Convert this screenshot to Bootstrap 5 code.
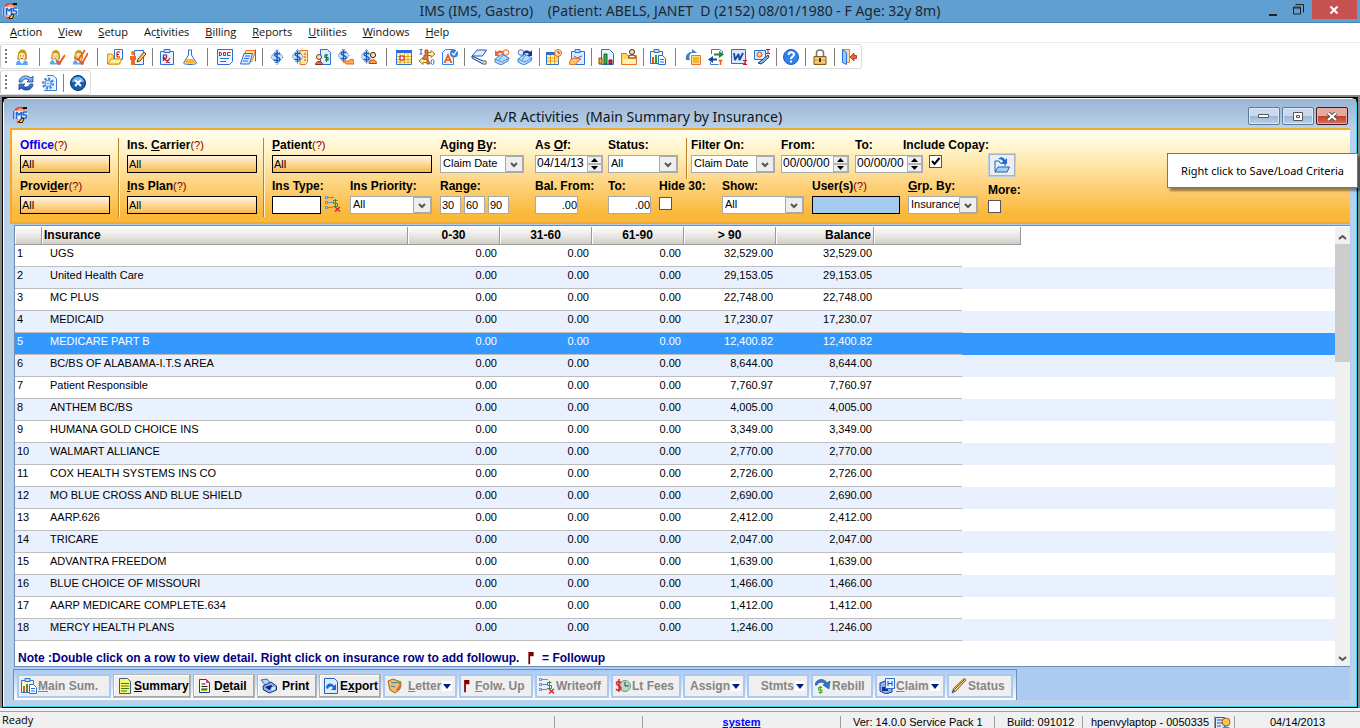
<!DOCTYPE html>
<html lang="en">
<head>
<meta charset="utf-8">
<meta name="viewport" content="width=device-width, initial-scale=1">
<title>IMS - A/R Activities</title>
<link href="https://cdn.jsdelivr.net/npm/bootstrap@5.3.0/dist/css/bootstrap.min.css" rel="stylesheet">
<script src="https://cdn.jsdelivr.net/npm/bootstrap@5.3.0/dist/js/bootstrap.bundle.min.js"></script>
<style>
:root{--ui:"Open Sans","Noto Sans",sans-serif;--cap:"Noto Sans","Open Sans",sans-serif;--ms:"Liberation Sans",Arial,sans-serif}
body{font:11px/14px var(--ms);color:#000;background:#fff}
u{text-decoration:underline;text-underline-offset:1px}
button,input,select{font:inherit;color:inherit}
.ico{width:16px;height:16px;flex:none;display:block}
/* main window caption */
.caption{height:23px;background:#619fd0;border-bottom:1px solid #4585b8;font:14px/22px var(--cap);color:#1c2630}
.caption .ico{margin:3px 0 0 2px}
.capbtn{border:0;background:none;padding:0;width:26px;height:19px}
.capbtn svg{display:block;margin:auto}
.capx{width:45px;background:#c75050;margin-right:3px}
.side{width:100px}
.sider{width:184px;gap:2px;padding:8px 2px 0 0}
.menubar{height:20px;border-bottom:1px solid #ececec;font:11px/18px var(--ui);padding-left:10px;gap:16px}
.menubar a{color:#111;text-decoration:none}
/* tool strips */
.strip{height:25px;margin-top:1px;border:1px solid #dcdcdc;border-left-color:#ccc;border-radius:3px;padding-left:4px;width:max-content}
.grip{width:2px;height:16px;margin-right:4px;background:repeating-linear-gradient(#777 0 2px,#fff 2px 4px)}
.strip button{width:23px;height:22px;border:0;background:none;padding:3px}
.sepw{width:12px;height:18px;border-left:1px solid #808080;margin-left:5px;margin-right:-5px}
.sepn{width:6px;height:18px;border-left:1px solid #808080;margin-left:2px;margin-right:-2px}
/* child window */
.mdi{min-height:0;background:#000;border:2px solid #888;border-bottom:0;padding:1px 0 0 1px}
.child{min-height:0;background:#b9d1ea;border:1px solid #fff;border-right-color:#2fd6ee;border-bottom-color:#2fd6ee;border-top-left-radius:6px;border-top-right-radius:6px;margin:0 1px 1px 0;padding:0 6px 6px}
.childcap{height:29px;margin:0 -6px;padding:0 6px;background:linear-gradient(#9ab5d3,#b9d1ea);font:14px/36px var(--cap);color:#101418}
.childcap .ico{margin:8px 0 0 2px}
.wbtn{width:32px;height:18px;padding:0;border:1px solid #5f7895;border-radius:2px;background:linear-gradient(#c9daee 48%,#9db8d6 50%,#b8d0ea);box-shadow:inset 0 0 0 1px #dbe8f5}
.wbtn svg{display:block;margin:auto}
.wbtnx{background:linear-gradient(#e6a79c 48%,#bf3f25 50%,#d3715c);border-color:#4a1420;box-shadow:inset 0 0 0 1px #e8b0a6}
/* criteria */
.criteria{height:96px;flex:none;border:2px solid #f0a92e;border-right:0;background:linear-gradient(#fffdea 4%,#fff3c8 22%,#fdd27c 60%,#fbb93c 90%);padding:8px 0 0 8px}
.criteria label{display:block;font-size:12px;font-weight:700;white-space:nowrap;line-height:14px;margin-bottom:3px}
.criteria .q{font-size:11px;font-weight:400;color:#800000}
.fld{height:41px;flex:none}
.box{display:block;height:18px;border:1px solid #000;padding:0 1px;line-height:15px;background:linear-gradient(#fff5e4,#fbba4a);border-radius:0;width:100%}
.blank{background:#fff}
.plain{border:1px solid #a9a9a9;background:#fff}
.vline{width:2px;border-left:1px solid #b8842a;border-right:1px solid #fff3d0;height:79px;margin-right:7px}
.vshort{height:auto;margin-right:3px}
.v2{margin-left:2px}.v6{margin-left:6px}
.dd{display:block;height:18px;border:1px solid #a9a9a9;border-radius:0;appearance:none;padding:0 18px 2px 2px;line-height:14px;background:#fff url("data:image/svg+xml,%3Csvg xmlns='http://www.w3.org/2000/svg' width='18' height='16'%3E%3Cpath d='M.5.5h17v15H.5z' fill='%23eee' stroke='%23a9a9a9'/%3E%3Cpath d='M6 7l3 3 3-3' fill='none' stroke='%23555' stroke-width='2'/%3E%3C/svg%3E") right/18px 16px no-repeat}
.spin{height:18px;border:1px solid #a9a9a9;background:#fff}
.spin input{width:51px;border:0;padding:0 1px;height:15px;line-height:15px;font-size:12px;background:none}
.spin button{display:block;width:15px;height:8px;padding:0;border:1px solid #b5b5b5;background:#eee}
.spin svg{display:block;margin:auto}
.num{text-align:right;padding-right:0}
.chk{appearance:none;width:13px;height:13px;border:1px solid #555;background:#fff;display:block;margin:0}
.chk:checked{background:#fff url("data:image/svg+xml,%3Csvg xmlns='http://www.w3.org/2000/svg' width='11' height='11'%3E%3Cpath d='M2 5l2.5 3L9.500 2' fill='none' stroke='%23000' stroke-width='2'/%3E%3C/svg%3E") center no-repeat}
.w21{width:21px}.w43{width:43px}.w49{width:49px}.w82{width:82px}.w88{width:88px}.w70{width:70px}.w84{width:84px}.w130{width:130px}
.s51{width:51px}.s63{width:63px}.s73{width:73px}.s74{width:74px}.s78{width:78px}.s80{width:80px}.s90{width:90px}.s95{width:95px}.s96{width:96px}.s168{width:168px}
.rng{gap:3px}.userbox{background:#a6caf0}
.pull{margin-left:-26px}
.iconbtn{width:26px;height:22px;border:1px solid #a0b4cc;outline:1px solid #b8cfe8;background:#eee;padding:1px 4px}
.tip{position:absolute;right:-8px;top:23px;border:1px solid #767676;background:#fff;box-shadow:3px 3px 2px #0006;padding:9px 13px;font:11px/15px var(--cap);z-index:3}
/* list */
.listbox{min-height:0;background:#fff;border:1px solid #6e8fb8;border-width:1px 0 1px 1px;margin:1px 0 0 4px;padding-top:1px;outline:1px solid #aecbf0}
.grid{width:100%;table-layout:fixed;border-collapse:separate;border-spacing:0}
.grid th{height:18px;padding:0 2px;background:linear-gradient(#fdfdfc,#e6e4df 60%,#cfccc4);border:solid #9a9a9a;border-width:0 1px 1px 0;box-shadow:inset 1px 0 #fff;font-size:12px;line-height:17px;text-align:center}
.grid th:last-child{background:#fff;border:0;box-shadow:none}
.grid td{height:22px;padding:0 3px 4px 2px;line-height:17px;border-bottom:1px solid #bdbdbd;white-space:nowrap;text-align:right}
.grid td.l{text-align:left}
.grid td.name{padding-left:8px}
.grid td.tail{border:0;background:linear-gradient(#bdbdbd,#bdbdbd) left bottom/88px 1px no-repeat}
.grid td.rest{border:0}
.grid td.b{padding-right:2px}
.grid tbody tr:nth-child(even){background:#eaf1fe}
.grid tbody tr.sel{background:#39f;color:#fff}
.sbar{width:15px;background:#f0f0f0}
.sbar button{height:17px;border:0;padding:0;background:none;width:15px}
.thumb{height:118px;background:#cdcdcd}
.note{color:#000080;font-size:12px;font-weight:700;padding:10px 3px 8px;white-space:pre}
.btnzone{background:#accbf2;margin-left:3px;flex:none}
.btnbar{border:1px solid #6e8fb8;border-bottom:0;margin-top:2px;padding:4px 3px 2px;gap:2px;background:linear-gradient(#a9caf5,#fff);width:max-content}
.cmd{height:24px;border:2px solid #abc9ee;background:#efefef;font-size:12px;font-weight:700;padding:0 2px;display:flex;align-items:center;gap:1px;white-space:nowrap}
.cmd svg{flex:none}
.cmd.on{border:1px solid #b4b4b4;padding:0 3px;box-shadow:inset -1px -1px #a8a8a8,inset 1px 1px #fff}
.cmd:disabled{color:#858585}
.b60{width:60px}.b62{width:62px}.b66{width:66px}.b70{width:70px}.b74{width:74px}.b78{width:78px}.b94{width:94px}
/* status bar */
.statusbar{height:20px;flex:none;background:#f0f0f0;border-top:1px solid #fff;overflow:hidden;white-space:nowrap}
.statusbar .inner{border-top:1px solid #a0a0a0;margin-top:2px;padding-left:2px}
.statusbar .pane{border-left:1px solid #a0a0a0;height:12px;margin-top:4px;line-height:12px}
.ready{font:11px/15px var(--ui)}.sys{color:#00f}
.p20{width:20px}.p88{width:88px}.p126{width:126px}.p132{width:132px}.p154{width:154px}.p198{width:198px}
</style>
</head>
<body class="d-flex flex-column vh-100 overflow-hidden">

<svg width="0" height="0" class="position-absolute" aria-hidden="true"><defs>
<linearGradient id="bl" x2="0" y2="1"><stop stop-color="#9cf"/><stop offset="1" stop-color="#1450b8"/></linearGradient>
<symbol id="ims" viewBox="0 0 16 16"><circle cx="8" cy="8" r="7" fill="#f3a98a"/><path d="M3 3l5-3 5 2M5 15h6" stroke="#d43" stroke-width="2" fill="none"/><path d="M0 4h16v8H0z" fill="#eaf3ff"/><path d="M1.500 4v8M4.500 12V5L7 8l2.500-3v7M15.500 5h-4v3h3v3h-4" fill="none" stroke="#2468d8" stroke-width="1.700" stroke-linejoin="bevel"/><path d="M11 0h4v2h-4z" fill="#111"/><path d="M7 15l3-4 2 1-2 4z" fill="#fd0" stroke="#111"/></symbol>
<symbol id="head" viewBox="0 0 16 16"><path d="M2 16c0-4 2-5 6-5s6 1 6 5z" fill="#5aa5f5"/><path d="M5 11l3 4 3-4z" fill="#fff"/><path d="M3 10c1-2 0-9 5-9.500S13 6 13 10l-2 1H5z" fill="#c79a1c"/><ellipse cx="8" cy="7.500" rx="3.200" ry="3.700" fill="#ffe9a8"/><path d="M6 7h1M9 7h1M7 9.500h2" stroke="#754"/></symbol>
<symbol id="head1" viewBox="0 0 16 16"><use href="#head" x="-1" width="15" height="16"/><path d="M7 11l3 4 6-9" stroke="#e8591c" stroke-width="2" fill="none"/></symbol>
<symbol id="head2" viewBox="0 0 16 16"><use href="#head" x="-1" width="15" height="16"/><path d="M3 8l3 3 7-10M7 11l3 4 6-11" stroke="#e8591c" stroke-width="1.600" fill="none"/></symbol>
<symbol id="folderE" viewBox="0 0 16 16"><path d="M7.500.500h8v10h-8z" fill="#fff" stroke="#2a6fd6"/><path d="M13 3h-3v5h3M10 5.500h2" stroke="#b00" fill="none"/><path d="M.500 15V5h5l1 2v3h8l-2 5z" fill="#ffe073" stroke="#e88a10"/><path d="M1 15l3-5h11l-3 5z" fill="#fff0a0" stroke="#e88a10"/></symbol>
<symbol id="pmanpen" viewBox="0 0 16 16"><path d="M4.500 1.500h9v14h-9z" fill="#eef6ff" stroke="#2a6fd6"/><circle cx="3" cy="4" r="2" fill="#f26b21"/><path d="M0 7h6v4H5v5H1v-5H0z" fill="#f26b21"/><path d="M7 13l1-3 6-7 2 2-6 7z" fill="#ffc94d" stroke="#832"/></symbol>
<symbol id="rx" viewBox="0 0 16 16"><path d="M1.500 2.500h13v13h-13z" fill="#e9f4ff" stroke="#2a6fd6"/><path d="M5 .500h6v3H5z" fill="#bfe0ff" stroke="#2a6fd6"/><path d="M4.500 12V6h3v3h-3l6 5M11 9l-3.500 5" stroke="#a01838" fill="none" stroke-width="1.200"/></symbol>
<symbol id="flask" viewBox="0 0 16 16"><path d="M6 1h4M6.500 1v5L1.500 14c0 2 13 2 13 0L9.500 6V1" fill="#fff" stroke="#2a6fd6"/><path d="M4.500 10h7l2 4c-1 1-10 1-11 0z" fill="#ffb52b"/></symbol>
<symbol id="doc" viewBox="0 0 16 16"><path d="M.500.500h15v12l-3 3H.500z" fill="#eef6ff" stroke="#2a6fd6"/><path d="M2.500 3v4l2-1V4zM6.500 3.500h2v3h-2zM13.500 3.500h-3v3h3" stroke="#b01020" stroke-width=".9" fill="none"/><path d="M3 9.500h9M3 12.500h6" stroke="#2a6fd6"/></symbol>
<symbol id="pages" viewBox="0 0 16 16"><path d="M6 1.500h9.500L12 12.500H2.500z" fill="#ffe9a0" stroke="#f07020"/><path d="M15.500.500v12" stroke="#2a6fd6"/><path d="M4 4.500h8.500l-3 10.500H.500z" fill="#d8eaff" stroke="#2a6fd6"/><path d="M5 7h5M4 9.500h5M3 12h5" stroke="#2a6fd6"/></symbol>
<symbol id="dol" viewBox="0 0 16 16"><path d="M8 .500L14 8l-6 7.500L2 8z" fill="#cfe4fb" stroke="#3b7ed0" stroke-dasharray="2 1"/><path d="M10.800 5.500C10 4 5.500 4 5.500 6s5.300 1.800 5.300 4-4.500 2-5.600.500M8 2v12" fill="none" stroke="#1756b8" stroke-width="1.400"/></symbol>
<symbol id="dolnote" viewBox="0 0 16 16"><path d="M8 1.500h7.500v12l-2 2H8z" fill="#ffe79a" stroke="#f07020"/><path d="M12 5h2M12 8h2M12 11h2" stroke="#d33"/><use href="#dol" x="-2" width="15" height="15"/></symbol>
<symbol id="doldoc" viewBox="0 0 16 16"><path d="M5.500.500h7l3 3v12h-10z" fill="#dcebff" stroke="#2a6fd6"/><path d="M13 6h-3v2.500h3V11h-3M11.500 5v8" stroke="#187a38" fill="none" stroke-width="1.200"/><circle cx="4" cy="8" r="2.500" fill="#ffe0b0" stroke="#733a18"/><path d="M.500 15.500c0-4 7-4 7 0z" fill="#f2703a" stroke="#8b2a10"/></symbol>
<symbol id="dolhand" viewBox="0 0 16 16"><use href="#dol" x="-2" y="-1" width="15" height="15"/><path d="M5 12h5l4-2 2 1v4H8z" fill="#ffa94a" stroke="#e8641c"/></symbol>
<symbol id="dolman" viewBox="0 0 16 16"><use href="#dol" x="-2" width="15" height="15"/><circle cx="12" cy="6" r="2.600" fill="#ffdcae" stroke="#55240c"/><path d="M8 14.500c0-5 7.500-5 7.500 0z" fill="#ff9c50" stroke="#b54414"/></symbol>
<symbol id="cal" viewBox="0 0 16 16"><path d="M.500 1.500h15v14H.500z" fill="#fff6c2" stroke="#2a6fd6"/><path d="M0 1h16v3H0z" fill="#2a6fd6"/><path d="M1 7.500h14M1 10.500h14M1 13h14M4 4v11M8.500 4v11M12 4v11" stroke="#f0a818"/><path d="M4 7h4v4H4z" fill="#fff" stroke="#b01020"/></symbol>
<symbol id="io" viewBox="0 0 16 16"><path d="M2 0v5M.500.500h3M.500 5h3" stroke="#2a6fd6"/><path d="M6 1h3v4H6zM5 6h4v4l2 5H8l-1-3-3 1z" fill="#f0752a" stroke="#8f3e0c" stroke-width=".7"/><path d="M0 12l4-3.500v2h4v3H4v2zM16 5l-4-3.500v2H9v3h3v2z" fill="#fff1b0" stroke="#96661a" stroke-width=".9"/><ellipse cx="13.500" cy="13" rx="1.500" ry="2.500" fill="#fff" stroke="#2a6fd6"/></symbol>
<symbol id="acheck" viewBox="0 0 16 16"><path d="M.500 3.500l3-3h8v15H.500z" fill="#eef6ff" stroke="#2a86f0"/><path d="M2.500 14L6 6l3.500 8M4 11h4" stroke="#f05010" stroke-width="1.700" fill="none"/><circle cx="12" cy="4.500" r="4" fill="#3b7ed0"/><path d="M10 4l2 2 3-5" stroke="#fff" stroke-width="1.300" fill="none"/></symbol>
<symbol id="flag3" viewBox="0 0 16 16"><path d="M6 1h9.500l-4 6H1z" fill="#dcecff" stroke="#2458b8"/><path d="M1 7l11 5h3v3h-3L1 9z" fill="#cfe4ff" stroke="#1c3c98"/><path d="M12 12.500h3v2h-3z" fill="#fc3"/></symbol>
<symbol id="mailr" viewBox="0 0 16 16"><path d="M1 10l7-5 7 4-1 3-7 4-6-3z" fill="#b7dbfb" stroke="#3b7ed0"/><path d="M1 10l7 3 7-4M4 12l5-6" stroke="#4d92dd" fill="none"/><circle cx="12" cy="3.500" r="2.800" fill="#ffe8d8" stroke="#f26522"/><path d="M1 1v6h5L4 5c3-2 5-1 6 2 1-5-4-7-7-4z" fill="#f26522"/></symbol>
<symbol id="mailb" viewBox="0 0 16 16"><path d="M1 10l7-5 7 4-1 3-7 4-6-3z" fill="#b7dbfb" stroke="#3b7ed0"/><path d="M1 10l7 3 7-4M4 12l5-6" stroke="#4d92dd" fill="none"/><circle cx="4" cy="3.500" r="2.800" fill="#e4f2ff" stroke="#5a7ab0"/><path d="M15 1v6h-5l2-2C9 3 7 4 6 7 5 2 10 0 13 3z" fill="#16349c"/></symbol>
<symbol id="calclk" viewBox="0 0 16 16"><path d="M.500 3.500h12v12H.500z" fill="#fff3a8" stroke="#2a6fd6"/><path d="M0 3h12v3H0z" fill="#2a6fd6"/><path d="M1 9h12M1 12h12M4.500 6v9M8.500 6v9" stroke="#e8a010"/><circle cx="12" cy="4" r="3.500" fill="#ffe3a0" stroke="#e8641c"/><path d="M12 2v2h2" stroke="#a33" fill="none"/></symbol>
<symbol id="cliphand" viewBox="0 0 16 16"><path d="M2.500 2.500h13v13h-13z" fill="#d8ebff" stroke="#2a6fd6"/><path d="M6 .500h5v3H6z" fill="#bfe0ff" stroke="#2a6fd6"/><path d="M5 7l3 2 5-2" stroke="#2a6fd6" fill="none"/><path d="M0 15l2-5 4-1 6 1-3 2-3 4z" fill="#ffc36b" stroke="#e8641c"/></symbol>
<symbol id="chart" viewBox="0 0 16 16"><path d="M3.500.500h8l4 4v11h-12z" fill="#e6f2ff" stroke="#2a6fd6"/><path d="M1 9h3v6H1z" fill="#f5b320" stroke="#84400c"/><path d="M6 5h3v10H6z" fill="#36b24a" stroke="#0d6a24"/><path d="M11 11h3v4h-3z" fill="#d8262c" stroke="#7a0c10"/></symbol>
<symbol id="foldman" viewBox="0 0 16 16"><path d="M.500 15.500v-11h5l1 2h9v9z" fill="#ffd75a" stroke="#f07020"/><path d="M2 10h13v5H2z" fill="#fff4b8"/><circle cx="11" cy="3" r="2.500" fill="#ffe0b0" stroke="#4c1c10"/><path d="M7.500 9c0-4 7-4 7 0z" fill="#fff" stroke="#7c1818"/></symbol>
<symbol id="clipbar" viewBox="0 0 16 16"><path d="M.500 2.500h12v12H.500z" fill="#fff6cf" stroke="#2a6fd6"/><path d="M4 .500h5v3H4z" fill="#bfe0ff" stroke="#2a6fd6"/><path d="M2 8h2v6H2z" fill="#e8591c"/><path d="M5 6h2v8H5z" fill="#3a9a3a"/><path d="M8.500 6.500h4l3 3v6h-7z" fill="#fff" stroke="#2a6fd6"/><path d="M10 10.500h4M10 13h4" stroke="#2a6fd6"/></symbol>
<symbol id="sendnote" viewBox="0 0 16 16"><path d="M6.500 6.500h9v9h-9z" fill="#ffe36a" stroke="#f07020"/><path d="M8 9h6M8 11h6M8 13h6" stroke="#d98a10"/><path d="M1 11c-1-5 2-8 6-8V0l5 4H7C4 5 4 8 5 11z" fill="#3b7ed0"/></symbol>
<symbol id="swap" viewBox="0 0 16 16"><path d="M3.500 5V.500h8l3 2v2M2.500 13v2.500h8" fill="none" stroke="#3b7ed0"/><path d="M6 4.500h5V2l5 3.500L11 9V6.500H6z" fill="#1f8a2c"/><path d="M9 9.500H5V7L0 10.500 5 14v-2.500h4z" fill="#17479e"/><path d="M10.500 11.500h4M12.500 11v5" stroke="#e8591c" stroke-width="1.500"/></symbol>
<symbol id="word" viewBox="0 0 16 16"><path d="M.500.500h14v14H.500z" fill="#dbeafd" stroke="#2a6fd6"/><path d="M3 4l1 7 3.500-6 1 6L12 4" stroke="#1747a0" stroke-width="1.800" fill="none" stroke-linejoin="bevel"/><path d="M12 11.500h4M12 15.500h4M14 11v4" stroke="#c01818"/></symbol>
<symbol id="paint" viewBox="0 0 16 16"><path d="M.500 1.500h11v9H.500z" fill="#dcecff" stroke="#2a6fd6"/><circle cx="5.500" cy="5.500" r="2.500" fill="#ffd9a0" stroke="#b44"/><path d="M14 6l1 2-5 5-3 2-3-1 4-3z" fill="#8bb8ea" stroke="#1c3c80"/><path d="M12 .500h4M14 0v4M12 4.500h4" stroke="#c01818"/></symbol>
<symbol id="help" viewBox="0 0 16 16"><circle cx="8" cy="8" r="7.500" fill="#2f82ea" stroke="#1d5cc0"/><path d="M5.500 6c0-3.500 5.500-3.500 5.500-.500C11 7.500 8 7.500 8 10M8 11.500v2" stroke="#fff" stroke-width="2" fill="none"/></symbol>
<symbol id="lock" viewBox="0 0 16 16"><path d="M4.500 7V4c0-4 7-4 7 0v3" stroke="#777" stroke-width="1.600" fill="none"/><path d="M2 7.500h12v8H2z" fill="#e9b64a" stroke="#8a5f14"/><path d="M3 9.500h10M3 13h10" stroke="#fbe0a0"/><path d="M8 9v4" stroke="#432" stroke-width="2"/></symbol>
<symbol id="exit" viewBox="0 0 16 16"><path d="M1.500.500h7v13h-7z" fill="#ffd9a0" stroke="#e88a10"/><path d="M1.500.500l4 3v12l-4-2z" fill="#9cc6f5" stroke="#2a6fd6"/><path d="M15.500 6.500h-2.500V4L9 8l4 4V9.500h2.500z" fill="#f0642a" stroke="#a82810" stroke-width=".8"/></symbol>
<symbol id="refresh" viewBox="0 0 16 16"><path d="M1 7C1 1 9-1 13 3l2-2v6H9l2-2C8 3 5 4 4 7zM15 9c0 6-8 8-12 4l-2 2V9h6l-2 2c3 2 6 1 7-2z" fill="url(#bl)" stroke="#1a448c" stroke-width=".8"/></symbol>
<symbol id="gearpage" viewBox="0 0 16 16"><path d="M6 .500h6l3.500 3v12H3" fill="#eaf4ff" stroke="#3b7ed0"/><circle cx="7" cy="8.500" r="4.800" fill="none" stroke="#3b7ed0" stroke-width="2.500" stroke-dasharray="2 1.700"/><circle cx="7" cy="8.500" r="3.200" fill="#fff" stroke="#3b7ed0"/><path d="M7 5v7M3.500 8.500h7" stroke="#8ab4ea"/></symbol>
<symbol id="closeball" viewBox="0 0 16 16"><circle cx="8" cy="8" r="7.500" fill="#1660b4" stroke="#0c2f70"/><path d="M2 7c1-7 11-7 12 0z" fill="#6cb4ee"/><path d="M5 5l6 6M11 5l-6 6" stroke="#fff" stroke-width="2"/></symbol>
<symbol id="listx" viewBox="0 0 16 16"><path d="M.500.500h2v2h-2zM.500 5.500h2v2h-2zM.500 10.500h2v2h-2zM3 1.500h6M3 6.500h5M3 11.500h5" stroke="#5b8fd8" fill="none"/><path d="M12.500 4.500h-4v3h4v3H8M10.500 3v9" stroke="#3d8a4c" fill="none"/><path d="M10 11l5 4.500M15 11l-5 4.500" stroke="#c22" stroke-width="1.300"/></symbol>
<symbol id="openf" viewBox="0 0 16 16"><path d="M1 15V4h4l1 2h5v3" fill="#e0f0ff" stroke="#1d62b8"/><path d="M1 15l3-5h11.500L13 15z" fill="#9fd2fa" stroke="#1d62b8"/><path d="M4 2c3-3 6-2 7 1l2-2v6H7l2-2c0-2-2-3-5-3z" fill="#2068d8"/></symbol>
<symbol id="ypage" viewBox="0 0 16 16"><path d="M2.500.500h8l3 3v12h-11z" fill="#fff66a" stroke="#27638c"/><path d="M4 5.500h8M4 8h8M4 10.500h8M4 13h6" stroke="#3a7d1c"/></symbol>
<symbol id="dpage" viewBox="0 0 16 16"><path d="M2.500 1.500h7l3 3v10h-10z" fill="#fffbe0" stroke="#1b3aa0"/><path d="M4 11h6v2H4z" fill="#8c2"/><path d="M4.500 6h4M4.500 8.500h6M4.500 11h6" stroke="#222"/><path d="M9 1l4 4H9z" fill="#e833b8"/></symbol>
<symbol id="printer" viewBox="0 0 16 16"><path d="M0 2l6-1 4 5-5 2z" fill="#b9d4f6" stroke="#3f62b0"/><path d="M2 8l8-4 5.500 4v4l-7 3-6-3z" fill="#8fb2ea" stroke="#1b2f80"/><path d="M4 9l6-2 3 2-5 3z" fill="#16247c"/><circle cx="12" cy="10.500" r="2" fill="#d8f0ff"/></symbol>
<symbol id="exportp" viewBox="0 0 16 16"><path d="M1.500.500h10l3 3v12h-13z" fill="#d9ecff" stroke="#1d62b8"/><path d="M3 10c0-5 6-6 8-2l2-2v6H8l2-2c-1-2-4-2-5 1z" fill="#2068c8"/></symbol>
<symbol id="letter" viewBox="0 0 16 16"><path d="M1 3l5-2 8 3-1 7-5 4-5-3z" fill="#ecc068" stroke="#9a6a20"/><path d="M4 4l3 1 4-1M4 8l4 1" stroke="#3a7ad0" fill="none"/><path d="M9 12l4-6 2 1-4 6z" fill="#e85a4a"/><path d="M11 4h3v2h-3z" fill="#5b3"/></symbol>
<symbol id="flag" viewBox="0 0 16 16"><path d="M5 1h6v5H7v9H5z" fill="#800000"/></symbol>
<symbol id="fees" viewBox="0 0 16 16"><circle cx="10" cy="8" r="5.500" fill="#b5dcc0" stroke="#6a9a7c"/><path d="M10 4v4h4" stroke="#246" fill="none"/><path d="M6 5C5 3 1.500 3 1.500 5.500s4.500 2 4.500 4.500-3.500 3-5 1M4 1v13" stroke="#d8262c" stroke-width="1.500" fill="none"/></symbol>
<symbol id="rebill" viewBox="0 0 16 16"><path d="M0 7c1-7 10-7 12-2l3-2-1 8-6-4 2-1C8 3 3 4 2 7z" fill="#2f78c8" stroke="#174a8c" stroke-width=".6"/><path d="M7 9.500H3.500v2.500H7v2.500H3.500M5.200 8v8" stroke="#3a2" fill="none"/></symbol>
<symbol id="claim" viewBox="0 0 16 16"><path d="M1 5l5-2 3 6 4 1v4l-6 2-6-3z" fill="#8fb0ea" stroke="#1b3f90"/><path d="M3 9h6v4H3z" fill="#1c2f88"/><path d="M6.500.500h9v10h-9z" fill="#e6f2ff" stroke="#2a6fd6"/><path d="M9 3v5M13 3v5M9 5.500h4" stroke="#1747a0"/></symbol>
<symbol id="pen" viewBox="0 0 16 16"><path d="M1 15l1.500-4.500L13 .500l2 1.500L5 13z" fill="#fc6" stroke="#345" stroke-width=".8"/><path d="M4 11l9.500-9.500" stroke="#d33"/><path d="M1 15l2-4 1 1z" fill="#247"/></symbol>
<symbol id="usercard" viewBox="0 0 16 16"><path d="M.500 1.500h9v11h-9z" fill="#dcecff" stroke="#2a4fc6"/><path d="M2 4h6M2 7h5M2 10h4" stroke="#2a4fc6"/><circle cx="11" cy="6" r="4" fill="#f7c25a" stroke="#a86010"/><path d="M6 15c0-6 10-6 10 0z" fill="#3a8ae8"/></symbol>
<symbol id="tri" viewBox="0 0 10 10"><path d="M0 0h10v10H0z" fill="#fff"/><path d="M1 3h8L5 8z" fill="#001f7a"/></symbol>
</defs></svg>

<header class="caption d-flex justify-content-between flex-shrink-0">
  <div class="side"><svg class="ico"><use href="#ims"/></svg></div>
  <div>IMS (IMS, Gastro)&nbsp;&nbsp;&nbsp; (Patient: ABELS, JANET&nbsp; D (2152) 08/01/1980 - F Age: 32y 8m)</div>
  <div class="side d-flex justify-content-end">
    <button class="capbtn" aria-label="Minimize"><svg width="8" height="14"><path d="M0 12h8" stroke="#222" stroke-width="2"/></svg></button>
    <button class="capbtn" aria-label="Restore"><svg width="11" height="11"><path d="M.500 3h7v7h-7zM.500 4h7M2.500.500h8v8" fill="none" stroke="#222"/></svg></button>
    <button class="capbtn capx" aria-label="Close"><svg width="8" height="8"><path d="M.500.500l7 7M7.500.500l-7 7" stroke="#fff" stroke-width="2"/></svg></button>
  </div>
</header>

<nav class="menubar d-flex flex-shrink-0">
  <a href="#"><u>A</u>ction</a><a href="#"><u>V</u>iew</a><a href="#"><u>S</u>etup</a><a href="#">Ac<u>t</u>ivities</a><a href="#"><u>B</u>illing</a><a href="#"><u>R</u>eports</a><a href="#"><u>U</u>tilities</a><a href="#"><u>W</u>indows</a><a href="#"><u>H</u>elp</a>
</nav>

<div class="strip d-flex align-items-center flex-shrink-0" id="tools"><span class="grip"></span></div>
<div class="strip d-flex align-items-center flex-shrink-0" id="tools2"><span class="grip me-2"></span></div>

<main class="mdi d-flex flex-column flex-grow-1">
<section class="child d-flex flex-column flex-grow-1">
  <div class="childcap d-flex justify-content-between flex-shrink-0">
    <div class="side"><svg class="ico"><use href="#ims"/></svg></div>
    <div>A/R Activities&nbsp; (Main Summary by Insurance)</div>
    <div class="sider d-flex justify-content-end">
      <button class="wbtn" aria-label="Minimize"><svg width="12" height="6"><path d="M.500 1.500h10v3h-10z" fill="#fff" stroke="#555"/></svg></button>
      <button class="wbtn" aria-label="Restore"><svg width="12" height="9"><path d="M1.500.500h9v8h-9zM4.500 3.500h3v2h-3z" fill="#fff" stroke="#555"/></svg></button>
      <button class="wbtn wbtnx" aria-label="Close"><svg width="12" height="9"><path d="M2 1l8 7M10 1L2 8" stroke="#555" stroke-width="4"/><path d="M2 1l8 7M10 1L2 8" stroke="#fff" stroke-width="2"/></svg></button>
    </div>
  </div>

  <form class="criteria d-flex position-relative">
    <div class="s96">
      <div class="fld s90"><label for="office" class="sys">Office<span class="q">(?)</span></label><input id="office" class="box" value="All"></div>
      <div class="fld s90"><label for="prov">Provi<u>d</u>er<span class="q">(?)</span></label><input id="prov" class="box" value="All"></div>
    </div>
    <div class="vline v2"></div>
    <div>
      <div class="fld w130"><label for="carrier">Ins. <u>C</u>arrier<span class="q">(?)</span></label><input id="carrier" class="box" value="All"></div>
      <div class="fld w130"><label for="plan"><u>I</u>ns Plan<span class="q">(?)</span></label><input id="plan" class="box" value="All"></div>
    </div>
    <div class="vline v6"></div>
    <div>
      <div class="d-flex">
        <div class="fld s168 pe-2"><label for="patient"><u>P</u>atient<span class="q">(?)</span></label><input id="patient" class="box" value="All"></div>
        <div class="fld s95"><label for="aging">Aging <u>B</u>y:</label><select id="aging" class="dd w84"><option>Claim Date</option></select></div>
        <div class="fld s73"><label for="asof">As <u>O</u>f:</label><div class="spin d-inline-flex"><input id="asof" value="04/14/13"><span class="spb"></span></div></div>
        <div class="fld s78"><label for="status">Status:</label><select id="status" class="dd w70"><option>All</option></select></div>
        <div class="vline vshort"></div>
        <div class="fld s90"><label for="filter">Filter On:</label><select id="filter" class="dd w84"><option>Claim Date</option></select></div>
        <div class="fld s74"><label for="from">From:</label><div class="spin d-inline-flex"><input id="from" value="00/00/00"><span class="spb"></span></div></div>
        <div class="fld s74"><label for="to">To:</label><div class="spin d-inline-flex"><input id="to" value="00/00/00"><span class="spb"></span></div></div>
        <div class="fld"><label for="copay" class="pull">Include Copay:</label><input type="checkbox" id="copay" class="chk" checked></div>
        <button type="button" class="iconbtn mt-3" aria-label="Criteria"><svg class="ico"><use href="#openf"/></svg></button>
      </div>
      <div class="d-flex">
        <div class="fld s78"><label for="itype">Ins Type:</label><div class="d-flex gap-1"><input id="itype" class="box blank w49"><svg class="ico"><use href="#listx"/></svg></div></div>
        <div class="fld s90"><label for="iprio">Ins Priority:</label><select id="iprio" class="dd w82"><option>All</option></select></div>
        <div class="fld s95"><label for="r1">Ra<u>ng</u>e:</label><div class="d-flex rng"><input id="r1" class="box plain w21" value="30"><input aria-label="Range 2" class="box plain w21" value="60"><input aria-label="Range 3" class="box plain w21" value="90"></div></div>
        <div class="fld s73"><label for="bfrom">Bal. From:</label><input id="bfrom" class="box plain num w43" value=".00"></div>
        <div class="fld s51"><label for="bto">To:</label><input id="bto" class="box plain num w43" value=".00"></div>
        <div class="fld s63"><label for="hide30">Hide 30:</label><input type="checkbox" id="hide30" class="chk mt-1"></div>
        <div class="fld s90"><label for="show">Show:</label><select id="show" class="dd w82"><option>All</option></select></div>
        <div class="fld s96"><label for="users">User(s)<span class="q">(?)</span></label><input id="users" class="box w88 userbox"></div>
        <div class="fld s80"><label for="grp"><u>G</u>rp. By:</label><select id="grp" class="dd w70"><option>Insurance</option></select></div>
        <div class="fld pt-1"><label for="more">More:</label><input type="checkbox" id="more" class="chk"></div>
      </div>
    </div>
    <div class="tip" role="tooltip">Right click to Save/Load Criteria</div>
  </form>

  <div class="listbox d-flex flex-grow-1">
    <div class="flex-grow-1 d-flex flex-column justify-content-between overflow-hidden">
      <table class="grid">
        <colgroup id="cols"></colgroup>
        <thead><tr><th></th><th class="text-start">Insurance</th><th>0-30</th><th>31-60</th><th>61-90</th><th>&gt; 90</th><th class="text-end">Balance</th><th></th><th></th></tr></thead>
        <tbody id="rows"></tbody>
      </table>
      <div class="note d-flex">Note :Double click on a row to view detail. Right click on insurance row to add followup. <svg width="16" height="14" viewBox="0 0 16 16"><use href="#flag"/></svg> = Followup</div>
    </div>
    <div class="sbar d-flex flex-column">
      <button aria-label="Scroll up"><svg width="9" height="6"><path d="M1 5l3.500-3L8 5" fill="none" stroke="#555" stroke-width="2"/></svg></button>
      <div class="thumb"></div>
      <button class="mt-auto" aria-label="Scroll down"><svg width="9" height="6"><path d="M1 1l3.500 3L8 1" fill="none" stroke="#555" stroke-width="2"/></svg></button>
    </div>
  </div>

  <div class="btnzone">
    <div class="btnbar d-flex">
      <button class="cmd b94" disabled><svg class="ico"><use href="#clipbar"/></svg><span><u>M</u>ain Sum.</span></button>
      <button class="cmd on b78"><svg class="ico"><use href="#ypage"/></svg><span><u>S</u>ummary</span></button>
      <button class="cmd on b62"><svg class="ico"><use href="#dpage"/></svg><span>D<u>e</u>tail</span></button>
      <button class="cmd on b60"><svg class="ico"><use href="#printer"/></svg><span class="ps-1">Print</span></button>
      <button class="cmd on b62"><svg class="ico"><use href="#exportp"/></svg><span>E<u>x</u>port</span></button>
      <button class="cmd b74" disabled><svg class="ico"><use href="#letter"/></svg><span class="ps-1"><u>L</u>etter</span><svg width="10" height="10"><use href="#tri"/></svg></button>
      <button class="cmd b74" disabled><svg width="11" height="14" viewBox="4 0 12 16"><use href="#flag" width="16" height="16"/></svg><span><u>F</u>olw. Up</span></button>
      <button class="cmd b74" disabled><svg class="ico"><use href="#listx"/></svg><span>Writeoff</span></button>
      <button class="cmd b70" disabled><svg class="ico"><use href="#fees"/></svg><span>Lt Fees</span></button>
      <button class="cmd b62 justify-content-end" disabled><span>Assign</span><svg width="10" height="10"><use href="#tri"/></svg></button>
      <button class="cmd b62 justify-content-end" disabled><span>Stmts</span><svg width="10" height="10"><use href="#tri"/></svg></button>
      <button class="cmd b62" disabled><svg class="ico"><use href="#rebill"/></svg><span>Rebill</span></button>
      <button class="cmd b70" disabled><svg class="ico"><use href="#claim"/></svg><span><u>C</u>laim</span><svg width="10" height="10"><use href="#tri"/></svg></button>
      <button class="cmd b66" disabled><svg class="ico"><use href="#pen"/></svg><span>Status</span></button>
    </div>
  </div>
</section>
</main>

<footer class="statusbar">
  <div class="inner d-flex">
    <div class="flex-grow-1 ready">Ready</div>
    <div class="pane p88"></div>
    <div class="pane p198 text-center fw-bold sys"><u>system</u></div>
    <div class="pane p154 ps-2"><span class="ps-1">Ver: 14.0.0 Service Pack 1</span></div>
    <div class="pane p88 ps-2"><span class="ps-1">Build: 091012</span></div>
    <div class="pane p132 ps-2">hpenvylaptop - 0050335</div>
    <div class="pane p20"><svg class="ico"><use href="#usercard"/></svg></div>
    <div class="pane p126 text-center">04/14/2013</div>
  </div>
</footer>

<script>
// Toolbar contents: icon ids, with "|" for a wide and "." for a narrow separator.
function strip(id, list) {
  document.getElementById(id).insertAdjacentHTML('beforeend', list.split(' ').map(n =>
    n === '|' ? '<span class="sepw"></span>' : n === '.' ? '<span class="sepn"></span>' :
    `<button aria-label="${n}"><svg class="ico"><use href="#${n}"/></svg></button>`).join(''));
}
strip('tools', 'head | head1 head2 | folderE pmanpen . rx flask | doc pages . dol dolnote doldoc dolhand dolman | cal io acheck . flag3 mailr mailb . calclk cliphand . chart foldman . clipbar | sendnote swap word paint . help . lock . exit');
strip('tools2', 'refresh gearpage . closeball');

document.querySelectorAll('.spb').forEach(s => {
  s.innerHTML = '<button type="button" aria-label="Up"><svg width="7" height="4"><path d="M0 4h7L3.500 0z"/></svg></button><button type="button" aria-label="Down"><svg width="7" height="4"><path d="M0 0h7L3.500 4z"/></svg></button>';
});

document.getElementById('cols').innerHTML =
  [27, 366, 92, 92, 92, 92, 98, 147, 0].map(w => w ? `<col style="width:${w}px">` : '<col>').join('');
const data = [
  ['UGS', '32,529.00'], ['United Health Care', '29,153.05'], ['MC PLUS', '22,748.00'], ['MEDICAID', '17,230.07'],
  ['MEDICARE PART B', '12,400.82'], ['BC/BS OF ALABAMA-I.T.S AREA', '8,644.00'], ['Patient Responsible', '7,760.97'],
  ['ANTHEM BC/BS', '4,005.00'], ['HUMANA GOLD CHOICE INS', '3,349.00'], ['WALMART ALLIANCE', '2,770.00'],
  ['COX HEALTH SYSTEMS INS CO', '2,726.00'], ['MO BLUE CROSS AND BLUE SHIELD', '2,690.00'], ['AARP.626', '2,412.00'],
  ['TRICARE', '2,047.00'], ['ADVANTRA FREEDOM', '1,639.00'], ['BLUE CHOICE OF MISSOURI', '1,466.00'],
  ['AARP MEDICARE COMPLETE.634', '1,412.00'], ['MERCY HEALTH PLANS', '1,246.00']];
document.getElementById('rows').innerHTML = data.map(([n, v], i) =>
  `<tr${i === 4 ? ' class="sel"' : ''}><td class="l">${i + 1}</td><td class="l name">${n}</td>` +
  '<td>0.00</td>'.repeat(3) + `<td>${v}</td><td class="b">${v}</td><td class="tail"></td><td class="rest"></td></tr>`).join('');
</script>
</body>
</html>
